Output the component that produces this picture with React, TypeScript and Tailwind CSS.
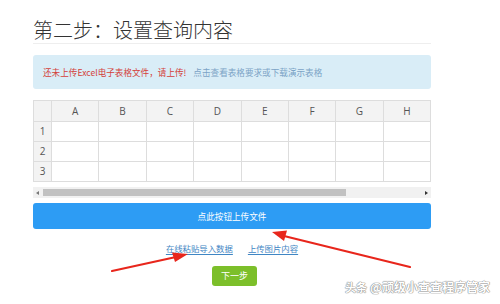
const FONT = "font-['Noto_Sans_CJK_SC','Noto_Sans',sans-serif]";
const COLS = ["A", "B", "C", "D", "E", "F", "G", "H"];
const ROWS = [1, 2, 3];

function Arrows() {
  return (
    <svg className="pointer-events-none absolute inset-0" width="500" height="304" viewBox="0 0 500 304">
      <line x1="112" y1="271" x2="176" y2="257" stroke="#e8261c" strokeWidth="2.2" strokeLinecap="round" />
      <polygon points="188,254 172,252.5 175,262" fill="#e8261c" />
      <line x1="410" y1="267" x2="284" y2="236" stroke="#e8261c" strokeWidth="2.2" strokeLinecap="round" />
      <polygon points="272,232 287,230.5 284,241" fill="#e8261c" />
    </svg>
  );
}

function Watermark() {
  return (
    <div
      className={`pointer-events-none absolute left-[345px] top-[279px] flex items-center gap-[3px] text-[12px] font-bold leading-[16px] text-white ${FONT}`}
      style={{ textShadow: "0 0 1px #888, 0 0 1px #888, 0 0 1px #888" }}
    >
      <span className="text-[11px]">头条</span>
      <span>@顽级小查查程序管家</span>
    </div>
  );
}

export default function App() {
  return (
    <div className={`relative h-[304px] w-[500px] overflow-hidden bg-white ${FONT}`}>
      <div className="ml-[33px] w-[398px] pt-[17px]">
        {/* 标题 */}
        <div className="h-[27px] border-b border-[#eeeeee] text-[20px] font-light leading-[26px] text-[#333333]">
          第二步：设置查询内容
        </div>

        {/* 提示 */}
        <div className="mt-[11px] flex h-[34px] items-center gap-[7px] rounded-[3px] bg-[#d9edf7] px-[10px] text-[8.6px]">
          <span className="text-[#d43f3a]">还未上传Excel电子表格文件，请上传!</span>
          <span className="text-[#7ba3c6]">点击查看表格要求或下载演示表格</span>
        </div>

        {/* 表格 */}
        <table className="mt-[11px] w-[398px] table-fixed border-collapse font-['Open_Sans',sans-serif] text-[10px] text-[#555555]">
          <colgroup>
            <col className="w-[18px]" />
            {COLS.map((c) => (
              <col key={c} />
            ))}
          </colgroup>
          <thead>
            <tr className="h-[21px] bg-[#f3f3f3]">
              <th className="border border-[#dddddd] font-normal" />
              {COLS.map((c) => (
                <th key={c} className="border border-[#dddddd] font-normal">
                  {c}
                </th>
              ))}
            </tr>
          </thead>
          <tbody>
            {ROWS.map((r) => (
              <tr key={r} className="h-[20px]">
                <td className="border border-[#dddddd] bg-[#f3f3f3] text-center">{r}</td>
                {COLS.map((c) => (
                  <td key={c} className="border border-[#dddddd]" />
                ))}
              </tr>
            ))}
          </tbody>
        </table>

        {/* 滚动条 */}
        <div className="mt-[5px] flex h-[11px] items-center bg-[#f1f1f1] px-[3px]">
          <span className="h-0 w-0 border-y-[2.5px] border-r-[3px] border-y-transparent border-r-[#777]" />
          <div className="ml-[4px] h-[7px] w-[303px] bg-[#c1c1c1]" />
          <span className="ml-auto h-0 w-0 border-y-[2.5px] border-l-[3px] border-y-transparent border-l-[#333]" />
        </div>

        {/* 上传按钮 */}
        <div className="mt-[5px] flex h-[26px] items-center justify-center rounded-[3px] bg-[#2d9cf4] text-[8.6px] text-white">
          点此按钮上传文件
        </div>

        {/* 链接 */}
        <div className="mt-[12px] flex h-[14px] items-center justify-center gap-[15px] text-[8.4px] text-[#3f86c4]">
          <span className="underline underline-offset-2">在线粘贴导入数据</span>
          <span className="underline underline-offset-2">上传图片内容</span>
        </div>

        {/* 下一步 */}
        <div className="mt-[11px] ml-[179px] flex h-[20px] w-[45px] items-center justify-center rounded-[3px] bg-[#7cbf2a] text-[9px] text-white">
          下一步
        </div>
      </div>

      <Arrows />
      <Watermark />
    </div>
  );
}
